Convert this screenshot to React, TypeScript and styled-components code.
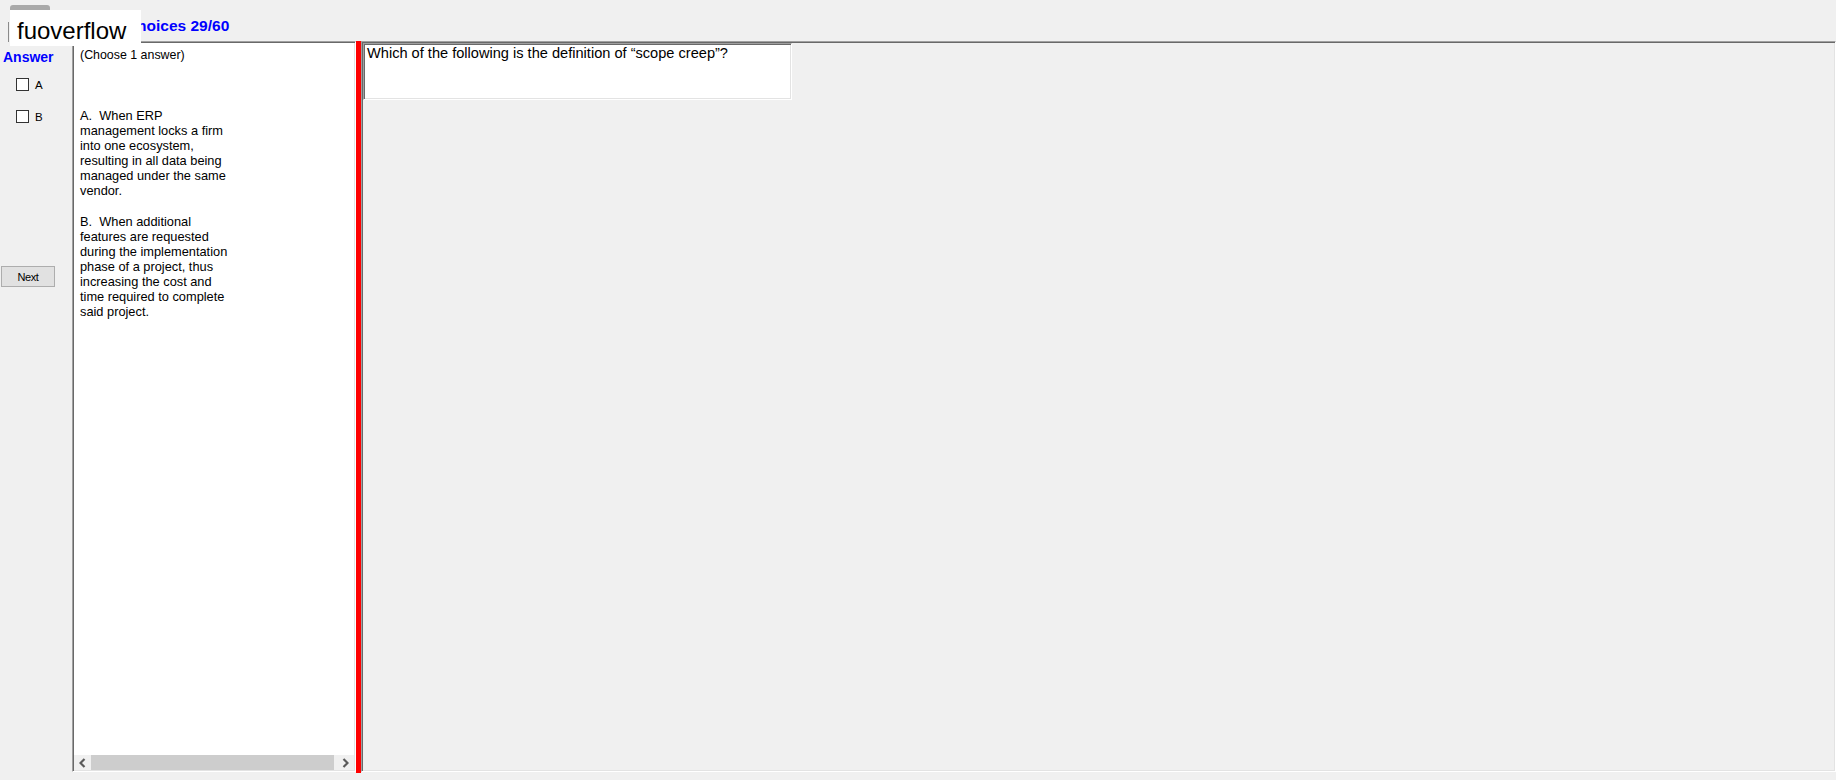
import React from 'react';
import styled, { createGlobalStyle, css } from 'styled-components';

const GlobalStyle = createGlobalStyle`
  html,
  body {
    margin: 0;
    padding: 0;
    background: #f0f0f0;
  }

  body {
    font-family: 'Liberation Sans', Arial, sans-serif;
    color: #000000;
    overflow: hidden;
  }
`;

// classic sunken 3D border: dark on top/left, light on bottom/right
const sunken = css`
  box-sizing: border-box;
  border: 1px solid;
  border-color: #a0a0a0 #ffffff #ffffff #a0a0a0;
  padding: 1px;
  box-shadow: inset 1px 1px 0 #696969, inset -1px -1px 0 #e3e3e3;
`;

const Window = styled.div`
  position: relative;
  width: 1836px;
  height: 780px;
  background: #f0f0f0;
  display: flex;
  flex-direction: column;
  overflow: hidden;
`;

const Header = styled.header`
  height: 41px;
  flex-shrink: 0;
  display: flex;
  align-items: flex-start;
`;

const TabEdge = styled.div`
  width: 1px;
  height: 20px;
  margin: 22px 0 0 8px;
  background: #8a8a8a;
`;

const Tab = styled.div`
  width: 40px;
  height: 36px;
  margin: 5px 0 0 1px;
  background: #a9a9a9;
  border-radius: 3px 3px 0 0;
`;

const Title = styled.h1`
  margin: 17px 0 0 13px;
  font-size: 15.5px;
  line-height: 18px;
  font-weight: 700;
  color: #0000ff;
  white-space: nowrap;
`;

const Watermark = styled.div`
  position: absolute;
  left: 10px;
  top: 10px;
  width: 131px;
  height: 36px;
  box-sizing: border-box;
  padding: 9px 0 0 7px;
  background: #ffffff;
  font-size: 24px;
  line-height: 24px;
  color: #000000;
`;

const Body = styled.div`
  display: flex;
  align-items: flex-start;
  height: 731px;
  flex-shrink: 0;
`;

const AnswerColumn = styled.aside`
  width: 72px;
  flex-shrink: 0;
  padding-top: 8px;
  display: flex;
  flex-direction: column;
`;

const AnswerHeading = styled.div`
  margin-left: 3px;
  font-size: 14px;
  line-height: 16px;
  font-weight: 700;
  color: #0000ff;
`;

const ChoiceList = styled.div`
  margin-top: 13px;
  display: flex;
  flex-direction: column;
`;

const ChoiceRow = styled.label`
  height: 32px;
  padding-left: 16px;
  display: flex;
  align-items: flex-start;
  gap: 6px;
`;

const CheckBox = styled.span`
  width: 13px;
  height: 13px;
  box-sizing: border-box;
  border: 1px solid #333333;
  background: #ffffff;
`;

const ChoiceLabel = styled.span`
  font-size: 11.5px;
  line-height: 12px;
  letter-spacing: -0.3px;
  padding-top: 1px;
`;

const NextButton = styled.button`
  margin: 124px 0 0 1px;
  width: 54px;
  height: 21px;
  padding: 0;
  box-sizing: border-box;
  background: #e1e1e1;
  border: 1px solid #adadad;
  border-radius: 0;
  font-family: 'Liberation Sans', Arial, sans-serif;
  font-size: 11px;
  letter-spacing: -0.4px;
  color: #000000;
`;

const ChoicesPanel = styled.section`
  ${sunken};
  width: 284px;
  height: 731px;
  flex-shrink: 0;
  display: flex;
  flex-direction: column;
  background: #ffffff;
`;

const PanelText = styled.div`
  flex: 1;
  padding: 5px 0 0 6px;
  overflow: hidden;
`;

const ChooseHint = styled.div`
  font-size: 12.4px;
  line-height: 15px;
`;

const Option = styled.p<{ $gap: number }>`
  margin: ${(p) => p.$gap}px 0 0;
  font-size: 12.8px;
  line-height: 15px;

  span {
    display: block;
    white-space: pre;
  }
`;

const HScrollBar = styled.div`
  height: 15px;
  flex-shrink: 0;
  display: flex;
  background: #f0f0f0;
`;

const ScrollArrow = styled.div`
  width: 17px;
  display: flex;
  align-items: center;
  justify-content: center;
`;

const ScrollTrack = styled.div`
  flex: 1;
  display: flex;
`;

const ScrollThumb = styled.div`
  width: 243px;
  background: #cdcdcd;
`;

const Splitter = styled.div`
  width: 5px;
  height: 732px;
  flex-shrink: 0;
  background: #ff0000;
`;

const QuestionPanel = styled.main`
  ${sunken};
  flex: 1;
  height: 731px;
  background: #f0f0f0;
`;

const QuestionBox = styled.div`
  ${sunken};
  width: 429px;
  height: 57px;
  padding: 1px 1px 1px 3px;
  background: #ffffff;
  font-size: 14.6px;
  line-height: 17px;
`;

const Chevron: React.FC<{ dir: 'left' | 'right' }> = ({ dir }) => (
  <svg width="7" height="10" viewBox="0 0 7 10">
    <path
      d={dir === 'left' ? 'M5.5 1 L1.5 5 L5.5 9' : 'M1.5 1 L5.5 5 L1.5 9'}
      fill="none"
      stroke="#5a5a5a"
      strokeWidth="2.2"
    />
  </svg>
);

const options = [
  {
    gap: 45,
    lines: [
      'A.  When ERP',
      'management locks a firm',
      'into one ecosystem,',
      'resulting in all data being',
      'managed under the same',
      'vendor.',
    ],
  },
  {
    gap: 16,
    lines: [
      'B.  When additional',
      'features are requested',
      'during the implementation',
      'phase of a project, thus',
      'increasing the cost and',
      'time required to complete',
      'said project.',
    ],
  },
];

const App: React.FC = () => {
  return (
    <>
      <GlobalStyle />
      <Window>
        <Header>
          <TabEdge />
          <Tab />
          <Title>Multiple Choices 29/60</Title>
        </Header>

        <Body>
          <AnswerColumn>
            <AnswerHeading>Answer</AnswerHeading>
            <ChoiceList>
              {['A', 'B'].map((key) => (
                <ChoiceRow key={key}>
                  <CheckBox />
                  <ChoiceLabel>{key}</ChoiceLabel>
                </ChoiceRow>
              ))}
            </ChoiceList>
            <NextButton>Next</NextButton>
          </AnswerColumn>

          <ChoicesPanel>
            <PanelText>
              <ChooseHint>(Choose 1 answer)</ChooseHint>
              {options.map((opt, i) => (
                <Option key={i} $gap={opt.gap}>
                  {opt.lines.map((line, j) => (
                    <span key={j}>{line}</span>
                  ))}
                </Option>
              ))}
            </PanelText>
            <HScrollBar>
              <ScrollArrow>
                <Chevron dir="left" />
              </ScrollArrow>
              <ScrollTrack>
                <ScrollThumb />
              </ScrollTrack>
              <ScrollArrow>
                <Chevron dir="right" />
              </ScrollArrow>
            </HScrollBar>
          </ChoicesPanel>

          <Splitter />

          <QuestionPanel>
            <QuestionBox>
              Which of the following is the definition of “scope creep”?
            </QuestionBox>
          </QuestionPanel>
        </Body>

        <Watermark>fuoverflow</Watermark>
      </Window>
    </>
  );
};

export default App;
